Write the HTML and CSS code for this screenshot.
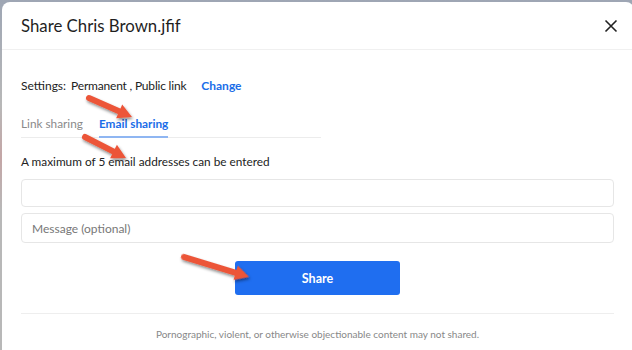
FILE: index.html
```html
<!DOCTYPE html>
<html>
<head>
<meta charset="utf-8">
<link rel="stylesheet" href="styles.css">
</head>
<body>
<div class="dialog">
  <div class="header">
    <div class="title">Share Chris Brown.jfif</div>
    <svg class="close" width="14" height="14" viewBox="0 0 14 14"><path d="M1.5 1.5 L12.5 12.5 M12.5 1.5 L1.5 12.5" stroke="#222" stroke-width="1.6" fill="none"/></svg>
  </div>
  <div class="body">
    <div class="settings">
      <span class="label">Settings:</span>
      <span class="value">Permanent , Public link</span>
      <a class="change">Change</a>
    </div>
    <div class="tabs">
      <span class="tab">Link sharing</span>
      <span class="tab active">Email sharing</span>
    </div>
    <div class="hint">A maximum of 5 email addresses can be entered</div>
    <div class="input"></div>
    <div class="input msg">Message (optional)</div>
    <div class="actions"><button class="share">Share</button></div>
    <div class="footer">Pornographic, violent, or otherwise objectionable content may not shared.</div>
  </div>
  <svg class="arrows" width="632" height="350" viewBox="0 0 632 350">
    <defs>
      <filter id="sh" x="-30%" y="-50%" width="160%" height="200%">
        <feDropShadow dx="1" dy="2" stdDeviation="1.4" flood-color="#000" flood-opacity="0.45"/>
      </filter>
    </defs>
    <g filter="url(#sh)">
      <g transform="translate(89 98) rotate(23.8)">
        <line x1="0" y1="0" x2="36" y2="0" stroke="#ec5539" stroke-width="6" stroke-linecap="round"/>
        <polygon points="33,-7.5 47,0 33,7.5" fill="#ec5539"/>
      </g>
      <g transform="translate(85 137) rotate(27)">
        <line x1="0" y1="0" x2="35" y2="0" stroke="#ec5539" stroke-width="6" stroke-linecap="round"/>
        <polygon points="32,-7.5 46,0 32,7.5" fill="#ec5539"/>
      </g>
      <g transform="translate(184 257) rotate(17)">
        <line x1="0" y1="0" x2="57" y2="0" stroke="#ec5539" stroke-width="6" stroke-linecap="round"/>
        <polygon points="54,-7.5 68,0 54,7.5" fill="#ec5539"/>
      </g>
    </g>
  </svg>
</div>
</body>
</html>
```
FILE: styles.css
```css
html, body {
  margin: 0;
  padding: 0;
}
body {
  width: 632px;
  height: 350px;
  overflow: hidden;
  background: linear-gradient(180deg, #9ea6b4 0%, #b8b8b8 30%, #c4a6a6 45%, #b8b8b8 60%, #b8b8b8 100%);
  font-family: "Lato", "Open Sans", sans-serif;
  color: #222;
}
.dialog {
  position: relative;
  margin: 2px 0 0 2px;
  width: 632px;
  height: 348px;
  background: #fff;
  border-radius: 8px 8px 0 0;
}
.header {
  height: 47px;
  border-bottom: 1px solid #f0f0f0;
  display: flex;
  align-items: center;
  justify-content: space-between;
  padding: 0 16px 0 19px;
}
.title {
  font-size: 16.8px;
  color: #1f1f1f;
}
.close {
  display: block;
}
.body {
  padding: 0 16px 0 19px;
  width: 593px;
}
.settings {
  margin-top: 25px;
  height: 20px;
  display: flex;
  align-items: center;
  font-size: 12px;
  color: #222;
}
.settings .label {
  margin-right: 5px;
}
.settings .value {
  letter-spacing: -0.2px;
}
.change {
  margin-left: 15px;
  color: #1a6de8;
  font-weight: 700;
}
.tabs {
  margin-top: 21px;
  display: flex;
  gap: 16px;
  font-size: 11.8px;
  border-bottom: 1px solid #ececec;
  width: 300px;
}
.tab {
  color: #8a8a8a;
  padding-bottom: 5px;
  border-bottom: 2px solid transparent;
  margin-bottom: -1px;
}
.tab.active {
  color: #1a6de8;
  font-weight: 700;
  border-bottom-color: #8fb6f2;
}
.hint {
  margin-top: 16px;
  font-size: 11.8px;
  color: #222;
}
.input {
  margin-top: 10px;
  height: 26px;
  border: 1px solid #e6e6e6;
  border-radius: 4px;
}
.input.msg {
  margin-top: 6px;
  box-sizing: border-box;
  height: 30px;
  display: flex;
  align-items: center;
  padding-left: 10px;
  font-size: 12px;
  color: #777;
}
.actions {
  margin-top: 18px;
  display: flex;
  justify-content: center;
  padding-bottom: 18px;
  border-bottom: 1px solid #eeeeee;
}
.share {
  width: 165px;
  height: 34px;
  background: #1f6ef0;
  border: none;
  border-radius: 3px;
  color: #fff;
  font-family: inherit;
  font-size: 12.5px;
  font-weight: 700;
}
.footer {
  margin-top: 14px;
  text-align: center;
  font-size: 10px;
  color: #888;
}
.arrows {
  position: absolute;
  left: -2px;
  top: -2px;
  pointer-events: none;
}
```
